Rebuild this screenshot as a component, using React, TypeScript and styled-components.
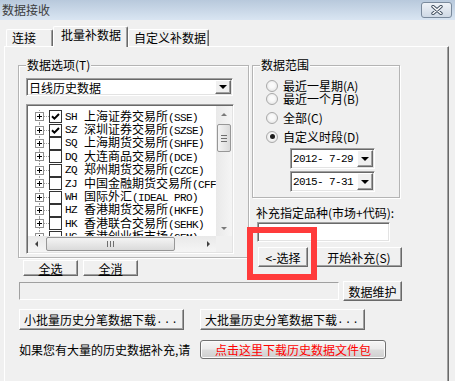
import React from 'react'
import styled, { createGlobalStyle, css } from 'styled-components'

type Dir = 'up' | 'down' | 'left' | 'right'

const GlobalStyle = createGlobalStyle`
	* { box-sizing: border-box; }
	html, body { margin: 0; padding: 0; background: #f0f0f0; }
	body {
		font-family: 'Noto Sans CJK SC', 'Noto Sans', sans-serif;
		font-size: 12px;
		color: #000;
	}
`

const Window = styled.div`
	width: 455px;
	height: 381px;
	overflow: hidden;
	display: flex;
	flex-direction: column;
	background: #f0f0f0;
`

const TitleBar = styled.div`
	height: 20px;
	flex: none;
	display: flex;
	align-items: center;
	justify-content: space-between;
	padding: 0 3px 0 2px;
	background: linear-gradient(#b8c9dc, #d9e5f2);
`

const Title = styled.span`
	color: #3c3c3c;
	line-height: 20px;
`

const CloseButton = styled.div`
	width: 31px;
	height: 16px;
	margin-top: -1px;
	display: flex;
	align-items: center;
	justify-content: center;
	border: 1px solid #7a8a9c;
	border-radius: 3px;
	background: linear-gradient(#eef2f7, #cfd9e5);
`

const TabStrip = styled.div`
	height: 19px;
	flex: none;
	margin: 7px 0 0 6px;
	display: flex;
	align-items: flex-end;
	position: relative;
	z-index: 1;
`

const Tab = styled.div<{ $active?: boolean; $w: number }>`
	width: ${p => p.$w}px;
	height: ${p => (p.$active ? 21 : 17)}px;
	margin-bottom: ${p => (p.$active ? -1 : 0)}px;
	padding-left: ${p => (p.$active ? 7 : 5)}px;
	line-height: 15px;
	white-space: nowrap;
	background: #f0f0f0;
	border-top: 1px solid #fff;
	border-left: 1px solid #fff;
	border-right: 1px solid #696969;
	border-radius: 2px 2px 0 0;
	box-shadow: inset -1px 0 #a0a0a0;
`

const Panel = styled.div`
	flex: 1;
	width: 445px;
	margin-left: 4px;
	padding: 18px 0 0 13px;
	border-top: 1px solid #fff;
	border-left: 1px solid #fff;
	border-right: 1px solid #696969;
	box-shadow: inset -1px 0 #a0a0a0;
	display: flex;
	flex-direction: column;
`

const TopRow = styled.div`
	display: flex;
	align-items: flex-start;
`

const LeftCol = styled.div`
	width: 231px;
	display: flex;
	flex-direction: column;
`

const RightCol = styled.div`
	position: relative;
	width: 150px;
	margin-left: 3px;
	display: flex;
	flex-direction: column;
`

const GroupBox = styled.div<{ $w: number; $h: number }>`
	position: relative;
	width: ${p => p.$w}px;
	height: ${p => p.$h}px;
	border: 1px solid #b4b4b4;
	box-shadow: inset 1px 1px #fff, 1px 1px #fff;
	display: flex;
	flex-direction: column;
`

const DataGroup = styled(GroupBox)`
	padding: 12px 0 0 7px;
`

const RangeGroup = styled(GroupBox)`
	padding: 13px 0 0 13px;
`

const Legend = styled.span`
	position: absolute;
	top: -8px;
	left: 7px;
	padding: 0 1px;
	line-height: 14px;
	background: #f0f0f0;
`

const sunken = css`
	border: 1px solid;
	border-color: #a0a0a0 #fff #fff #a0a0a0;
	box-shadow: inset 1px 1px #696969, inset -1px -1px #e3e3e3;
`

const raised = css`
	border: 1px solid;
	border-color: #fff #696969 #696969 #fff;
	box-shadow: inset -1px -1px #a0a0a0;
	background: #f0f0f0;
`

const mono = css`
	font-family: 'Liberation Mono', monospace;
	font-size: 11px;
	letter-spacing: -0.6px;
`

const Combo = styled.div<{ $w: number; $h: number }>`
	width: ${p => p.$w}px;
	height: ${p => p.$h}px;
	padding: 1px;
	display: flex;
	background: #fff;
	${sunken};
`

const ComboText = styled.span<{ $mono?: boolean }>`
	flex: 1;
	padding-left: 1px;
	white-space: pre;
	display: flex;
	align-items: center;
	${p => p.$mono && mono}
`

const DropButton = styled.span`
	width: 16px;
	display: flex;
	align-items: center;
	justify-content: center;
	${raised};
`

const arrowShape = (dir: Dir, size: number, color: string) => {
	switch (dir) {
		case 'down':
			return `border-left: ${size}px solid transparent; border-right: ${size}px solid transparent; border-top: ${size}px solid ${color};`
		case 'up':
			return `border-left: ${size}px solid transparent; border-right: ${size}px solid transparent; border-bottom: ${size}px solid ${color};`
		case 'left':
			return `border-top: ${size}px solid transparent; border-bottom: ${size}px solid transparent; border-right: ${size}px solid ${color};`
		default:
			return `border-top: ${size}px solid transparent; border-bottom: ${size}px solid transparent; border-left: ${size}px solid ${color};`
	}
}

const Arrow = styled.span<{ $dir: Dir; $size?: number; $color?: string }>`
	width: 0;
	height: 0;
	${p => arrowShape(p.$dir, p.$size ?? 4, p.$color ?? '#000')}
`

const ListBox = styled.div`
	margin-top: 8px;
	width: 208px;
	height: 150px;
	padding: 1px;
	display: grid;
	grid-template-columns: 1fr 16px;
	grid-template-rows: 1fr 16px;
	background: #fff;
	${sunken};
`

const TreeArea = styled.div`
	overflow: hidden;
	padding-top: 4px;
`

const TreeRow = styled.div`
	position: relative;
	height: 13.4px;
	padding-left: 7px;
	display: flex;
	align-items: center;
	white-space: nowrap;

	&::before {
		content: '';
		position: absolute;
		left: 11px;
		top: 0;
		bottom: 0;
		border-left: 1px dotted #a0a0a0;
	}
`

const Expander = styled.span`
	position: relative;
	z-index: 1;
	width: 9px;
	height: 9px;
	flex: none;
	display: flex;
	border: 1px solid #919191;
	background: #fff;
`

const Connector = styled.span`
	width: 5px;
	flex: none;
	border-top: 1px dotted #a0a0a0;
`

const CheckBox = styled.span`
	width: 13px;
	height: 13px;
	flex: none;
	display: flex;
	border: 1px solid #333;
	background: #fff;
`

const Code = styled.span`
	width: 19px;
	flex: none;
	margin-left: 3px;
	${mono};
`

const Name = styled.span`
	line-height: 13px;
`

const Latin = styled.span`
	${mono};
`

const VScroll = styled.div`
	display: flex;
	flex-direction: column;
	background: linear-gradient(90deg, #e9e9e9, #f5f5f5);
`

const HScroll = styled.div`
	display: flex;
	background: linear-gradient(#e9e9e9, #f5f5f5);
`

const ScrollButton = styled.span`
	width: 16px;
	height: 16px;
	flex: none;
	display: flex;
	align-items: center;
	justify-content: center;
`

const Thumb = styled.span<{ $horizontal?: boolean }>`
	flex: none;
	display: flex;
	align-items: center;
	justify-content: center;
	border: 1px solid #979797;
	border-radius: 2px;
	${p =>
		p.$horizontal
			? css`
					width: 129px;
					height: 14px;
					margin: 1px 0 0 2px;
					background: linear-gradient(#f4f4f4, #dadada);
				`
			: css`
					width: 14px;
					height: 28px;
					margin: 2px 0 0 1px;
					background: linear-gradient(90deg, #f4f4f4, #dadada);
				`}
`

const Grip = styled.span<{ $horizontal?: boolean }>`
	${p =>
		p.$horizontal
			? css`
					width: 7px;
					height: 6px;
					background: repeating-linear-gradient(90deg, #6e6e6e 0 1px, transparent 1px 3px);
				`
			: css`
					width: 6px;
					height: 7px;
					background: repeating-linear-gradient(#6e6e6e 0 1px, transparent 1px 3px);
				`}
`

const Spacer = styled.span`
	flex: 1;
`

const Corner = styled.div`
	background: #f0f0f0;
`

const Button = styled.button<{ $w: number; $h: number; $underline?: boolean }>`
	width: ${p => p.$w}px;
	height: ${p => p.$h}px;
	padding: 0;
	flex: none;
	font: inherit;
	color: #000;
	white-space: nowrap;
	display: flex;
	align-items: center;
	justify-content: center;
	text-decoration: ${p => (p.$underline ? 'underline' : 'none')};
	text-underline-offset: 1px;
	${raised};
`

const Dots = styled.span`
	${mono};
	letter-spacing: 1px;
`

const ButtonRow = styled.div<{ $top: number; $left: number; $gap: number }>`
	margin-top: ${p => p.$top}px;
	padding-left: ${p => p.$left}px;
	display: flex;
	align-items: center;
	gap: ${p => p.$gap}px;
`

const RadioRow = styled.div<{ $top: number }>`
	height: 13px;
	margin-top: ${p => p.$top}px;
	display: flex;
	align-items: center;
	gap: 5px;
	line-height: 13px;
	white-space: nowrap;
`

const RadioDot = styled.span<{ $on?: boolean }>`
	width: 12px;
	height: 12px;
	flex: none;
	border-radius: 50%;
	border: 1px solid #a9a9a9;
	background: radial-gradient(circle at 50% 45%, #fafafa 30%, #dedede 100%);
	display: flex;
	align-items: center;
	justify-content: center;

	&::after {
		content: '';
		width: 5px;
		height: 5px;
		border-radius: 50%;
		background: ${p => (p.$on ? '#1d1d1d' : 'transparent')};
	}
`

const DateCombo = styled(Combo)<{ $top: number }>`
	margin: ${p => p.$top}px 0 0 24px;
`

const SubLabel = styled.div`
	margin: 8px 0 0 4px;
	line-height: 14px;
	white-space: nowrap;
`

const CodeInput = styled.div`
	width: 133px;
	height: 20px;
	margin: 2px 0 0 5px;
	background: #fff;
	${sunken};
`

const Highlight = styled.div`
	position: absolute;
	left: -5px;
	top: 162px;
	width: 70px;
	height: 53px;
	border: 6px solid #ff3b3b;
	pointer-events: none;
`

const StatusRow = styled.div`
	height: 20px;
	margin-top: 5px;
	padding-left: 1px;
	display: flex;
	align-items: center;
	gap: 4px;
`

const StatusBox = styled.div`
	width: 320px;
	height: 18px;
	border: 1px solid;
	border-color: #a0a0a0 #fff #fff #a0a0a0;
`

const InfoRow = styled.div`
	height: 19px;
	margin-top: 10px;
	padding-left: 1px;
	display: flex;
	align-items: center;
`

const InfoText = styled.span`
	width: 181px;
	white-space: nowrap;
`

const LinkButton = styled.button`
	width: 186px;
	height: 19px;
	padding: 0;
	font: inherit;
	color: #ff0000;
	border: 1px solid #707070;
	border-radius: 3px;
	box-shadow: inset 0 0 0 1px #fbfbfb;
	background: linear-gradient(#f6f6f6 0%, #ebebeb 48%, #dddddd 52%, #cfcfcf 100%);
	display: flex;
	align-items: center;
	justify-content: center;
`

const exchanges = [
	{ code: 'SH', name: '上海证券交易所', en: '(SSE)', checked: true },
	{ code: 'SZ', name: '深圳证券交易所', en: '(SZSE)', checked: true },
	{ code: 'SQ', name: '上海期货交易所', en: '(SHFE)' },
	{ code: 'DQ', name: '大连商品交易所', en: '(DCE)' },
	{ code: 'ZQ', name: '郑州期货交易所', en: '(CZCE)' },
	{ code: 'ZJ', name: '中国金融期货交易所', en: '(CFFEX)' },
	{ code: 'WH', name: '国际外汇', en: '(IDEAL PRO)' },
	{ code: 'HZ', name: '香港期货交易所', en: '(HKFE)' },
	{ code: 'HK', name: '香港联合交易所', en: '(SEHK)' },
	{ code: 'HG', name: '香港创业板市场', en: '(GEM)' },
]

const ranges = [
	{ label: '最近一星期(A)', top: 0 },
	{ label: '最近一个月(B)', top: 0 },
	{ label: '全部(C)', top: 6 },
	{ label: '自定义时段(D)', top: 6, on: true },
]

const PlusIcon = () => (
	<svg width="7" height="7" viewBox="0 0 7 7">
		<path d="M1 3.5h5M3.5 1v5" stroke="#000" strokeWidth="1" />
	</svg>
)

const CheckIcon = () => (
	<svg width="11" height="11" viewBox="0 0 11 11">
		<path d="M2 5.2l2.4 2.4L9 3" fill="none" stroke="#000" strokeWidth="2" />
	</svg>
)

const CloseIcon = () => (
	<svg width="14" height="10" viewBox="0 0 14 10">
		<path d="M3 1.5l8 7M11 1.5l-8 7" stroke="#3f4d5e" strokeWidth="3.4" strokeLinecap="round" />
		<path d="M3 1.5l8 7M11 1.5l-8 7" stroke="#fff" strokeWidth="1.6" strokeLinecap="round" />
	</svg>
)

export default function App() {
	return (
		<>
			<GlobalStyle />
			<Window>
				<TitleBar>
					<Title>数据接收</Title>
					<CloseButton>
						<CloseIcon />
					</CloseButton>
				</TitleBar>

				<TabStrip>
					<Tab $w={47}>连接</Tab>
					<Tab $w={75} $active>
						批量补数据
					</Tab>
					<Tab $w={81}>自定义补数据</Tab>
				</TabStrip>

				<Panel>
					<TopRow>
						<LeftCol>
							<DataGroup $w={231} $h={193}>
								<Legend>数据选项(T)</Legend>
								<Combo $w={207} $h={18}>
									<ComboText>日线历史数据</ComboText>
									<DropButton>
										<Arrow $dir="down" $size={4} />
									</DropButton>
								</Combo>
								<ListBox>
									<TreeArea>
										{exchanges.map(ex => (
											<TreeRow key={ex.code}>
												<Expander>
													<PlusIcon />
												</Expander>
												<Connector />
												<CheckBox>{ex.checked && <CheckIcon />}</CheckBox>
												<Code>{ex.code}</Code>
												<Name>
													{ex.name}
													<Latin>{ex.en}</Latin>
												</Name>
											</TreeRow>
										))}
									</TreeArea>
									<VScroll>
										<ScrollButton>
											<Arrow $dir="up" $size={3} $color="#7a7a7a" />
										</ScrollButton>
										<Thumb>
											<Grip />
										</Thumb>
										<Spacer />
										<ScrollButton>
											<Arrow $dir="down" $size={3} $color="#7a7a7a" />
										</ScrollButton>
									</VScroll>
									<HScroll>
										<ScrollButton>
											<Arrow $dir="left" $size={3} $color="#404040" />
										</ScrollButton>
										<Thumb $horizontal>
											<Grip $horizontal />
										</Thumb>
										<Spacer />
										<ScrollButton>
											<Arrow $dir="right" $size={3} $color="#404040" />
										</ScrollButton>
									</HScroll>
									<Corner />
								</ListBox>
							</DataGroup>
							<ButtonRow $top={2} $left={5} $gap={5}>
								<Button $w={55} $h={16} $underline>
									全选
								</Button>
								<Button $w={55} $h={16} $underline>
									全消
								</Button>
							</ButtonRow>
						</LeftCol>

						<RightCol>
							<RangeGroup $w={148} $h={133}>
								<Legend>数据范围</Legend>
								{ranges.map(r => (
									<RadioRow key={r.label} $top={r.top}>
										<RadioDot $on={r.on} />
										<span>{r.label}</span>
									</RadioRow>
								))}
								<DateCombo $w={85} $h={21} $top={5}>
									<ComboText $mono>2012- 7-29</ComboText>
									<DropButton>
										<Arrow $dir="down" $size={4} />
									</DropButton>
								</DateCombo>
								<DateCombo $w={85} $h={21} $top={2}>
									<ComboText $mono>2015- 7-31</ComboText>
									<DropButton>
										<Arrow $dir="down" $size={4} />
									</DropButton>
								</DateCombo>
							</RangeGroup>
							<SubLabel>补充指定品种(市场+代码):</SubLabel>
							<CodeInput />
							<ButtonRow $top={5} $left={6} $gap={8}>
								<Button $w={50} $h={20}>
									&lt;-选择
								</Button>
								<Button $w={86} $h={20}>
									开始补充(S)
								</Button>
							</ButtonRow>
							<Highlight />
						</RightCol>
					</TopRow>

					<StatusRow>
						<StatusBox />
						<Button $w={59} $h={20}>
							数据维护
						</Button>
					</StatusRow>

					<ButtonRow $top={8} $left={1} $gap={16}>
						<Button $w={165} $h={21}>
							小批量历史分笔数据下载<Dots>...</Dots>
						</Button>
						<Button $w={165} $h={21}>
							大批量历史分笔数据下载<Dots>...</Dots>
						</Button>
					</ButtonRow>

					<InfoRow>
						<InfoText>如果您有大量的历史数据补充,请</InfoText>
						<LinkButton>点击这里下载历史数据文件包</LinkButton>
					</InfoRow>
				</Panel>
			</Window>
		</>
	)
}
